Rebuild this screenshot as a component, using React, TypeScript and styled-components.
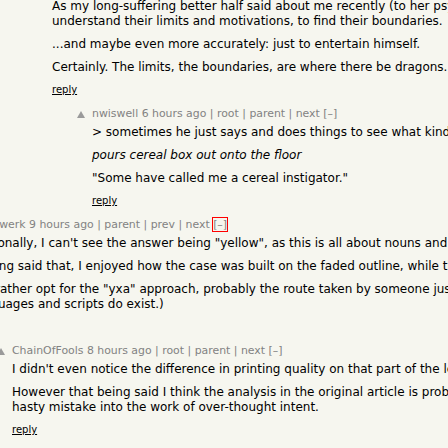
import React from "react";
import styled, { createGlobalStyle } from "styled-components";

const Global = createGlobalStyle`
  html, body {
    margin: 0;
    padding: 0;
    background: #f6f6ef;
    width: 448px;
    height: 448px;
    overflow: hidden;
  }
  body {
    font-family: "DejaVu Sans", Verdana, sans-serif;
  }
`;

const Thread = styled.div`
  width: 1100px;
  margin-left: -43px;
  margin-top: -1px;
`;

const Row = styled.div<{ $level: number }>`
  display: flex;
  align-items: flex-start;
  padding-left: ${(p) => p.$level * 40}px;
  margin-bottom: 11px;
`;

const VoteCell = styled.div`
  flex: none;
  width: 15px;
  padding-top: 4px;
  line-height: 0;
`;

const Main = styled.div`
  flex: 1;
  min-width: 0;
`;

const Head = styled.div`
  font-size: 10.9px;
  line-height: 13px;
  color: #828282;
  white-space: nowrap;
`;

const Toggle = styled.span<{ $focused?: boolean }>`
  display: inline-block;
  line-height: 13px;
  outline: ${(p) => (p.$focused ? "1px solid #ff0000" : "none")};
`;

const Body = styled.div<{ $noHead?: boolean }>`
  margin-top: ${(p) => (p.$noHead ? 0 : 5)}px;
  font-size: 12px;
  line-height: 15px;
  color: #000;
  white-space: nowrap;
`;

const Para = styled.p`
  margin: 8px 0 0;
  &:first-child {
    margin-top: 0;
  }
`;

const ReplyLine = styled.p`
  margin: 9px 0 0;
  font-size: 10px;
  line-height: 12px;
`;

const ReplyLink = styled.a`
  color: #000;
  text-decoration: underline;
`;

const Arrow = () => (
  <svg width="8" height="7" viewBox="0 0 8 7">
    <polygon points="0,7 4,0 8,7" fill="#9a9a9a" />
  </svg>
);

type Meta = {
  user: string;
  age: string;
  links: string[];
  focused?: boolean;
};

type CommentProps = {
  level: number;
  meta?: Meta;
  children: React.ReactNode;
};

const Comment = ({ level, meta, children }: CommentProps) => (
  <Row $level={level}>
    <VoteCell>{meta ? <Arrow /> : null}</VoteCell>
    <Main>
      {meta && (
        <Head>
          {meta.user} {meta.age}
          {meta.links.map((l) => ` | ${l}`).join("")}{" "}
          <Toggle $focused={meta.focused}>[–]</Toggle>
        </Head>
      )}
      <Body $noHead={!meta}>
        {children}
        <ReplyLine>
          <ReplyLink>reply</ReplyLink>
        </ReplyLine>
      </Body>
    </Main>
  </Row>
);

export default function App() {
  return (
    <>
      <Global />
      <Thread>
        <Comment level={2}>
          <Para>
            As my long-suffering better half said about me recently (to her psychiatrist, no less): he pushes people to
            <br />
            understand their limits and motivations, to find their boundaries.
          </Para>
          <Para>...and maybe even more accurately: just to entertain himself.</Para>
          <Para>Certainly. The limits, the boundaries, are where there be dragons.</Para>
        </Comment>
        <Comment
          level={3}
          meta={{ user: "nwiswell", age: "6 hours ago", links: ["root", "parent", "next"] }}
        >
          <Para>&gt; sometimes he just says and does things to see what kind of reaction he gets</Para>
          <Para>
            <i>pours cereal box out onto the floor</i>
          </Para>
          <Para>"Some have called me a cereal instigator."</Para>
        </Comment>
        <Comment
          level={0}
          meta={{ user: "noodwerk", age: "9 hours ago", links: ["parent", "prev", "next"], focused: true }}
        >
          <Para>Personally, I can't see the answer being "yellow", as this is all about nouns and not adjectives.</Para>
          <Para>Having said that, I enjoyed how the case was built on the faded outline, while the rest was pure deduction.</Para>
          <Para>
            (I'd rather opt for the "yxa" approach, probably the route taken by someone just guessing, though such
            <br />
            languages and scripts do exist.)
          </Para>
        </Comment>
        <Comment
          level={1}
          meta={{ user: "ChainOfFools", age: "8 hours ago", links: ["root", "parent", "next"] }}
        >
          <Para>I didn't even notice the difference in printing quality on that part of the letter.</Para>
          <Para>
            However that being said I think the analysis in the original article is probably reading a
            <br />
            hasty mistake into the work of over-thought intent.
          </Para>
        </Comment>
      </Thread>
    </>
  );
}
